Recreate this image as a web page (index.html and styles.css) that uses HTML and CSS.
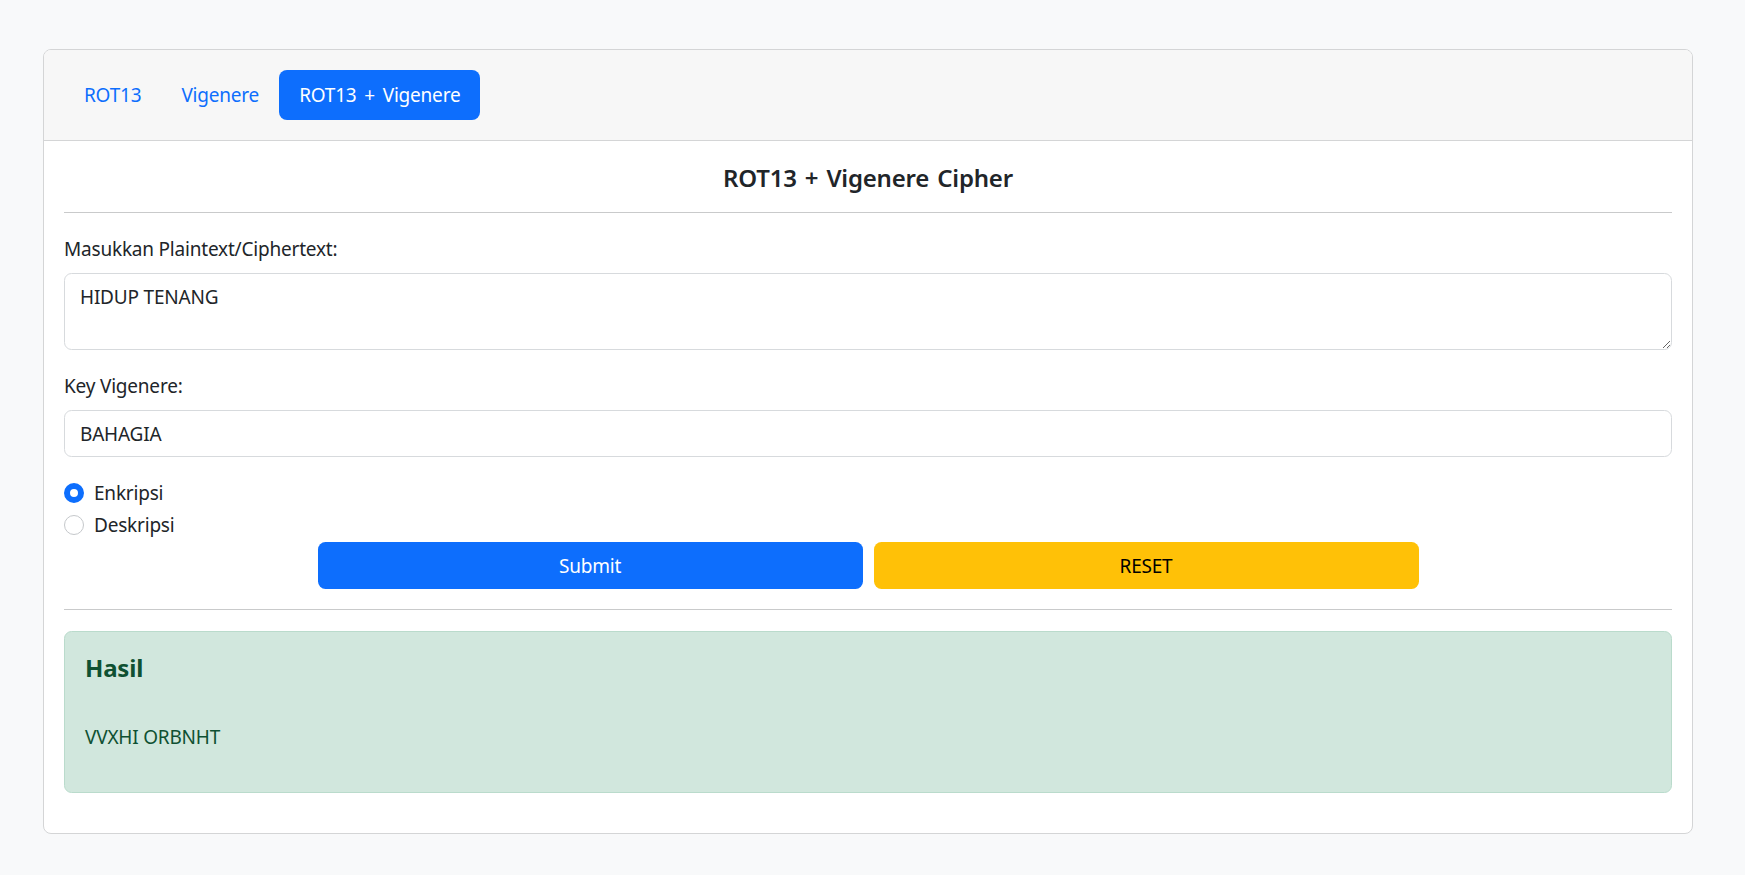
FILE: index.html
```html
<!DOCTYPE html>
<html lang="id">
<head>
<meta charset="utf-8">
<title>ROT13 + Vigenere Cipher</title>
<link rel="stylesheet" href="styles.css">
</head>
<body>
<div class="page">
  <div class="card">
    <div class="card-header">
      <nav class="pills">
        <a class="pill" href="#">ROT13</a>
        <a class="pill" href="#">Vigenere</a>
        <a class="pill active" href="#">ROT13 + Vigenere</a>
      </nav>
    </div>
    <div class="card-body">
      <h5 class="title">ROT13 + Vigenere Cipher</h5>
      <hr class="rule rule-top">
      <form class="form">
        <div class="field">
          <label class="label" for="text">Masukkan Plaintext/Ciphertext:</label>
          <textarea class="control textarea" id="text" rows="2">HIDUP TENANG</textarea>
        </div>
        <div class="field">
          <label class="label" for="key">Key Vigenere:</label>
          <input class="control" id="key" type="text" value="BAHAGIA">
        </div>
        <div class="check">
          <span class="radio checked"></span>
          <span class="check-label">Enkripsi</span>
        </div>
        <div class="check">
          <span class="radio"></span>
          <span class="check-label">Deskripsi</span>
        </div>
        <div class="actions">
          <button type="button" class="btn btn-primary">Submit</button>
          <button type="button" class="btn btn-warning">RESET</button>
        </div>
      </form>
      <hr class="rule rule-bottom">
      <div class="alert">
        <h4 class="alert-title">Hasil</h4>
        <p class="alert-text">VVXHI ORBNHT</p>
      </div>
    </div>
  </div>
</div>
</body>
</html>
```
FILE: styles.css
```css
* { box-sizing: border-box; }
html, body { margin: 0; padding: 0; }
body {
  background: #f8f9fa;
  font-family: "Noto Sans", "Open Sans", sans-serif;
  font-size: 19px;
  letter-spacing: -0.2px;
  line-height: 30px;
  color: #212529;
}
.page { padding: 49px 52px 0 43px; }
.card {
  width: 1650px;
  background: #fff;
  border: 1px solid #d4d5d6;
  border-radius: 8px;
  overflow: hidden;
}
.card-header {
  background: #f7f7f7;
  border-bottom: 1px solid #d4d5d6;
  padding: 20px 20px;
}
.pills { display: flex; gap: 0; }
.pill {
  display: block;
  padding: 10px 20px;
  line-height: 30px;
  color: #0d6efd;
  text-decoration: none;
  border-radius: 8px;
  word-spacing: 3px;
}
.pill.active { background: #0d6efd; color: #fff; }
.card-body { padding: 20px 20px 20px 20px; }
.title {
  margin: 0;
  text-align: center;
  font-size: 24px;
  line-height: 34px;
  font-weight: 600;
  padding-top: 0;
  word-spacing: 2px;
}
.rule {
  border: 0;
  border-top: 1px solid #c9cacb;
  margin: 0;
}
.rule-top { margin-top: 17px; margin-bottom: 21px; }
.field { margin-bottom: 21px; }
.label { display: block; margin-bottom: 9px; }
.control {
  display: block;
  width: 100%;
  font: inherit;
  letter-spacing: inherit;
  color: #212529;
  background: #fff;
  border: 1px solid #d7dadd;
  border-radius: 7.5px;
  padding: 7.5px 15px;
  line-height: 30px;
  height: 47px;
  outline: none;
}
.textarea { height: 77px; resize: vertical; }
.check {
  display: flex;
  align-items: center;
  height: 30px;
  margin-bottom: 2px;
}
.check:first-of-type { margin-top: 1px; }
.radio {
  width: 20px;
  height: 20px;
  border-radius: 50%;
  border: 1px solid #c5c8cb;
  background: #fff;
  margin-right: 10px;
  flex: none;
}
.radio.checked {
  border: 6px solid #0d6efd;
  background: #fff;
}
.actions {
  display: flex;
  justify-content: center;
  gap: 11px;
  margin-top: 1px;
}
.btn {
  width: 545px;
  height: 47px;
  font: inherit;
  letter-spacing: inherit;
  line-height: 30px;
  border: 0;
  border-radius: 7.5px;
  padding: 0;
}
.btn-primary { background: #0d6efd; color: #fff; }
.btn-warning { background: #ffc107; color: #000; }
.rule-bottom { margin-top: 20px; margin-bottom: 21px; }
.alert {
  background: #d1e7dd;
  border: 1px solid #badbcc;
  color: #0f5132;
  border-radius: 7.5px;
  padding: 21px 20px 20px;
  margin-bottom: 20px;
}
.alert-title {
  margin: 0 0 39px;
  font-size: 24px;
  line-height: 30px;
  font-weight: 700;
}
.alert-text { margin: 0 0 20px; }
```
